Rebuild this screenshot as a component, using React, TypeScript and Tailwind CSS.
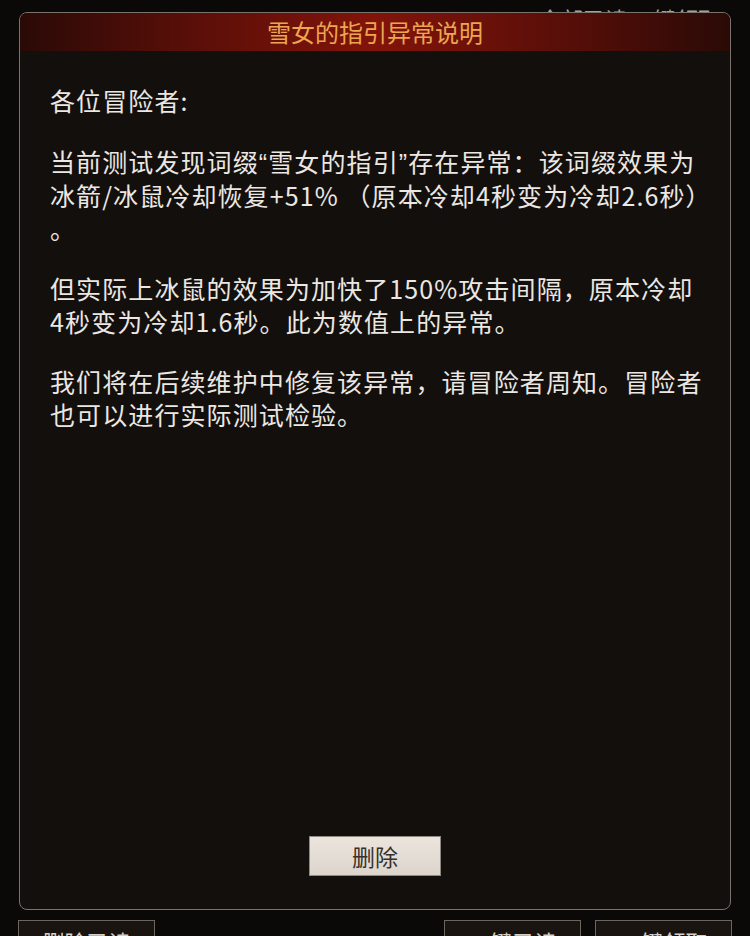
const quote = (s: string) => (
  <span style={{ fontFamily: '"Liberation Sans", sans-serif' }}>{s}</span>
);

const paragraphs: React.ReactNode[][] = [
  ["各位冒险者:"],
  [
    <>
      当前测试发现词缀{quote("\u201c")}雪女的指引{quote("\u201d")}存在异常：该词缀效果为
    </>,
    "冰箭/冰鼠冷却恢复+51% （原本冷却4秒变为冷却2.6秒）",
    "。",
  ],
  ["但实际上冰鼠的效果为加快了150%攻击间隔，原本冷却", "4秒变为冷却1.6秒。此为数值上的异常。"],
  ["我们将在后续维护中修复该异常，请冒险者周知。冒险者", "也可以进行实际测试检验。"],
];

const fontStack = { fontFamily: '"Noto Sans CJK SC", "Noto Sans", sans-serif' };

const footButton =
  "flex h-[30px] w-[137px] items-start justify-center border border-[#6c6661] bg-[#1a1410] pt-[9px] text-[22px] leading-[22px] text-[#d6cfc7]";

export default function App() {
  return (
    <div
      className="flex h-[936px] w-[750px] flex-col overflow-hidden bg-[#0b0908] text-[#ebe7e3]"
      style={fontStack}
    >
      <div className="flex h-[12px] shrink-0 items-end justify-end gap-6 overflow-hidden pr-[30px]">
        <span className="translate-y-[17px] text-[22px] leading-[22px] text-[#a8a19a]">全部已读 一键领取</span>
      </div>

      <div className="mx-[19px] flex h-[898px] shrink-0 flex-col overflow-hidden rounded-[8px] border-[1.5px] border-[#79736e] bg-[#130f0c]">
        <div className="flex h-[38px] shrink-0 items-center justify-center bg-[linear-gradient(90deg,#2a0a06_0%,#560e08_22%,#82140a_50%,#560e08_78%,#2a0a06_100%)]">
          <span className="text-[24px] leading-none text-[#eba652]">雪女的指引异常说明</span>
        </div>

        <div className="flex flex-1 flex-col gap-[28px] px-[30px] pt-[33px]">
          {paragraphs.map((lines, i) => (
            <div key={i} className="flex flex-col">
              {lines.map((line, j) => (
                <div key={j} className="whitespace-nowrap text-[25px] leading-[32.5px] tracking-[1.1px]">
                  {line}
                </div>
              ))}
            </div>
          ))}
        </div>

        <div className="flex shrink-0 justify-center pb-[33px]">
          <button
            type="button"
            className="flex h-[40px] w-[132px] items-center justify-center border border-[#8f8984] bg-[linear-gradient(180deg,#ebe5de,#ddd5cc)] text-[23px] leading-none text-[#37312c]"
          >
            删除
          </button>
        </div>
      </div>

      <div className="mt-[10px] flex shrink-0 items-start justify-between px-[18px]">
        <div className={footButton}>删除已读</div>
        <div className="flex gap-[14px]">
          <div className={footButton}>一键已读</div>
          <div className={footButton}>一键领取</div>
        </div>
      </div>
    </div>
  );
}
